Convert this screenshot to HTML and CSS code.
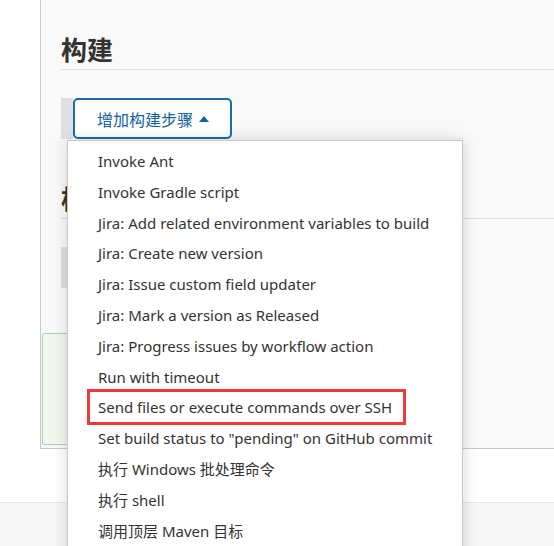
FILE: index.html
```html
<!DOCTYPE html>
<html lang="zh-CN">
<head>
  <meta charset="UTF-8">
  <meta name="viewport" content="width=device-width, initial-scale=1">
  <title>构建</title>
  <link rel="stylesheet" href="styles.css">
</head>
<body>
  <div class="main">
    <div class="section">
      <h2>构建</h2>
      <div class="step-row">
        <div class="handle"></div>
        <div class="add-wrap">
          <button class="add-btn">增加构建步骤 <span class="caret"></span></button>
          <ul class="menu">
            <li>Invoke Ant</li>
            <li>Invoke Gradle script</li>
            <li>Jira: Add related environment variables to build</li>
            <li>Jira: Create new version</li>
            <li>Jira: Issue custom field updater</li>
            <li>Jira: Mark a version as Released</li>
            <li>Jira: Progress issues by workflow action</li>
            <li>Run with timeout</li>
            <li><span class="mark">Send files or execute commands over SSH</span></li>
            <li>Set build status to "pending" on GitHub commit</li>
            <li>执行 Windows 批处理命令</li>
            <li>执行 shell</li>
            <li>调用顶层 Maven 目标</li>
          </ul>
        </div>
      </div>
    </div>
    <div class="section">
      <h2>构建后操作</h2>
      <div class="step-row">
        <div class="handle"></div>
        <button class="add-btn">增加构建后操作步骤 <span class="caret"></span></button>
      </div>
    </div>
    <div class="bottom-bar"></div>
  </div>
  <div class="gap"></div>
  <div class="footer"></div>
</body>
</html>
```

FILE: styles.css
```css
* { box-sizing: border-box; }
html, body {
  height: 546px;
  overflow: hidden;
}
body {
  margin: 0;
  background: #fff;
  color: #333;
  font-family: "Noto Sans", "Noto Sans CJK SC", sans-serif;
  font-size: 15px;
}
.main {
  margin-left: 40px;
  height: 449px;
  padding: 35px 0 0 20px;
  background: #f9f9f9;
  border-left: 1px solid #c8c8c8;
  border-bottom: 1px solid #c8c8c8;
}
.section + .section {
  margin-top: 45px;
}
h2 {
  margin: 0;
  padding-bottom: 3px;
  font-size: 26px;
  line-height: 31px;
  font-weight: 700;
  color: #333;
  border-bottom: 1px solid #dcdcdc;
}
.step-row {
  display: flex;
  margin-top: 28px;
  height: 41px;
}
.handle {
  width: 12px;
  background: #e0e0e0;
}
.add-wrap {
  position: relative;
}
.add-btn {
  height: 41px;
  padding: 0 21px 0 22px;
  background: #fff;
  border: 2px solid #1a6da4;
  border-radius: 5px;
  color: #14639a;
  font-family: "Noto Sans CJK SC", sans-serif;
  font-size: 16px;
  display: flex;
  align-items: center;
  gap: 6px;
}
.caret {
  width: 0;
  height: 0;
  border-left: 5px solid transparent;
  border-right: 5px solid transparent;
  border-bottom: 6px solid #14639a;
}
.menu {
  position: absolute;
  top: 42px;
  left: -6px;
  width: 396px;
  height: 420px;
  margin: 0;
  padding: 5px 0 0;
  list-style: none;
  background: #fff;
  border: 1px solid #c8c8c8;
  box-shadow: 0 0 14px rgba(0, 0, 0, 0.16);
  z-index: 2;
}
.menu li {
  height: 30.8px;
  line-height: 30.8px;
  padding-left: 30px;
  white-space: nowrap;
}
.mark {
  display: inline-block;
  line-height: 30px;
  margin: 0 -12px 0 -8px;
  padding: 0 11px 0 8px;
  outline: 3px solid #f03a3a;
}
.bottom-bar {
  margin: 45px 0 0 -19px;
  width: 380px;
  height: 112px;
  background: #f3f5ef;
  border: 1px solid #a6d3b7;
  border-radius: 2px;
}
.gap {
  height: 53px;
}
.footer {
  height: 60px;
  background: #f6f6f6;
  border-top: 1px solid #e6e6e6;
}
```
